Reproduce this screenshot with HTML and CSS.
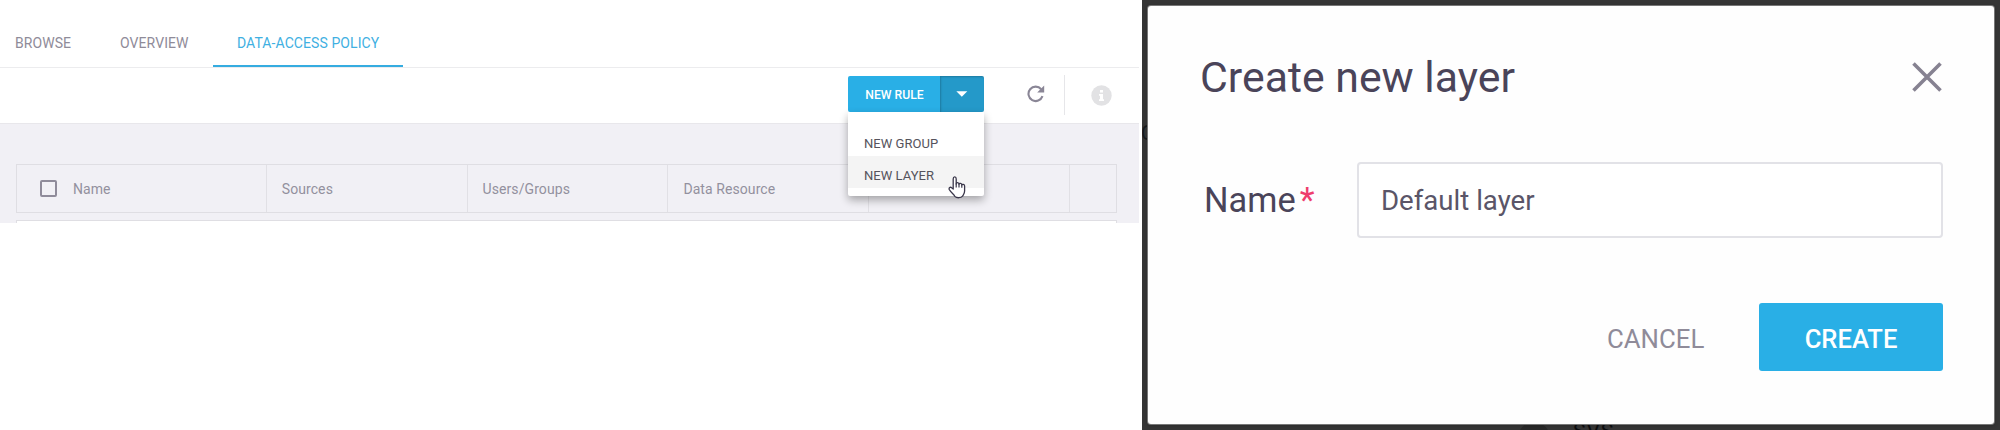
FILE: index.html
```html
<!DOCTYPE html>
<html lang="en">
<head>
<meta charset="utf-8">
<title>Data-Access Policy</title>
<link rel="stylesheet" href="styles.css">
</head>
<body>
<div class="page">
  <main class="policy">
    <nav class="tabs">
      <a class="tab tab-browse">BROWSE</a>
      <a class="tab tab-overview">OVERVIEW</a>
      <a class="tab tab-active">DATA-ACCESS POLICY</a>
    </nav>
    <div class="toolbar">
      <div class="split">
        <button class="split-main"><span>NEW RULE</span></button>
        <button class="split-toggle"><svg width="12" height="6" viewBox="0 0 12 6"><path d="M0.3 0.3H11.3L5.8 5.7Z" fill="#fff"/></svg></button>
        <div class="menu">
          <div class="menu-item">NEW GROUP</div>
          <div class="menu-item menu-hover">NEW LAYER</div>
          <svg class="cursor" width="18" height="23" viewBox="0 0 18 23"><path d="M5.2 13V2.9C5.2 .3 8.2 .3 8.2 2.9V8C8.2 6 11 6.2 11 8.2C11.3 6.8 13.8 7 13.8 9C14.2 7.8 16.6 8.2 16.6 10V15C16.6 18 15 19 14.6 20.2C13 22.2 8.6 22.2 6.8 20.4C6.2 18.6 3 16.7 1.4 13.8C.4 11.8 2.4 10.6 3.6 11.8Z" fill="#fff" stroke="#3a374a" stroke-width="1.3" stroke-linejoin="round"/><path d="M8.2 7.5V11.6M11 8V11.6M13.8 9V11.8" fill="none" stroke="#3a374a" stroke-width="1.2"/></svg>
        </div>
      </div>
      <svg class="refresh" width="18" height="18" viewBox="0 0 18 18"><path d="M14.2 4.2A7.2 7.2 0 1 0 15.5 11.2" fill="none" stroke="#8a8696" stroke-width="2.1"/><path d="M17.2 .6V7.6H10.2Z" fill="#8a8696"/></svg>
      <span class="divider"></span>
      <svg class="info" width="21" height="21" viewBox="0 0 21 21"><circle cx="10.5" cy="10.5" r="10.2" fill="#e2e2e4"/><path d="M9 5h3v2.5H9zM8 9h4v5.2h1V16H8v-1.8h1v-3.4H8z" fill="#fff"/></svg>
    </div>
    <section class="grid">
      <div class="head">
        <div class="cell cell-name"><span class="check"></span>Name</div>
        <div class="cell">Sources</div>
        <div class="cell">Users/Groups</div>
        <div class="cell">Data Resource</div>
        <div class="cell"></div>
        <div class="cell cell-last"></div>
      </div>
      <div class="row"></div>
    </section>
  </main>
  <aside class="backdrop">
    <span class="under under-left">C</span>
    <span class="under-blob"></span>
    <span class="under under-bottom">SVS</span>
    <div class="dialog">
      <header class="dialog-head">
        <h1 class="title">Create new layer</h1>
        <svg class="close" width="30" height="30" viewBox="0 0 30 30"><path d="M1.5 1.5L28.5 28.5M28.5 1.5L1.5 28.5" stroke="#868291" stroke-width="3.6" fill="none"/></svg>
      </header>
      <div class="field">
        <label class="label" for="name">Name<span class="star">*</span></label>
        <input class="input" id="name" value="Default layer">
      </div>
      <footer class="actions">
        <button class="cancel">CANCEL</button>
        <button class="create">CREATE</button>
      </footer>
    </div>
  </aside>
</div>
</body>
</html>
```
FILE: styles.css
```css
* { box-sizing: border-box; }
body { margin: 0; background: #fff; font-family: Roboto, "Liberation Sans", sans-serif; overflow: hidden; }
button { font-family: inherit; border: 0; padding: 0; }
.page { display: flex; width: 2000px; height: 430px; }

.policy { width: 1139px; height: 223px; margin-right: 3px; }
.tabs { display: flex; height: 68px; padding-left: 15px; border-bottom: 1px solid #ececee; font-size: 14px; letter-spacing: .08px; line-height: 20px; color: #8f8b99; }
.tab { display: block; height: 67px; padding-top: 33px; white-space: nowrap; }
.tab-browse { width: 105px; }
.tab-overview { width: 93px; }
.tab-active { width: 190px; padding-left: 24px; color: #3fb0e2; border-bottom: 2px solid #35ace0; }

.toolbar { display: flex; height: 55px; padding-left: 848px; }
.split { position: relative; display: flex; width: 136px; height: 36px; margin-top: 8px; z-index: 2; }
.split-main { width: 92px; background: #29afe6; color: #fff; font-size: 12.2px; font-weight: 500; border-radius: 2px 0 0 2px; padding: 1px 0 0 1px; }
.split-toggle { display: flex; width: 44px; padding: 15px 0 0 16px; background: #2499c9; border-radius: 0 2px 2px 0; box-shadow: inset 1px 1px 2px rgba(0,0,0,.2); }
.menu { position: absolute; top: 36px; left: 0; width: 136px; height: 84px; padding-top: 12px; background: #fff; border-radius: 0 0 2px 2px; box-shadow: 0 4px 8px rgba(0,0,0,.32); font-size: 13px; letter-spacing: .05px; color: #55535c; }
.menu-item { height: 32px; padding-left: 16px; line-height: 39px; }
.menu-hover { background: #f4f4f4; }
.cursor { position: absolute; left: 100px; top: 64px; }
.refresh { margin: 17px 0 0 43px; }
.divider { width: 1px; height: 40px; margin: 7px 0 0 19px; background: #e6e6e9; }
.info { margin: 17px 0 0 26px; }

.grid { height: 100px; padding: 40px 22px 0 16px; background: #f1f0f5; border-top: 1px solid #e8e7eb; overflow: hidden; }
.head { display: flex; height: 49px; border: 1px solid #dfdee3; font-size: 14px; letter-spacing: .08px; color: #93909e; }
.cell { display: flex; align-items: center; width: 201px; padding: 0 0 0 15px; border-right: 1px solid #e1e0e5; }
.cell-name { width: 250px; padding-left: 23px; }
.cell-last { width: 46px; border: 0; }
.check { width: 17px; height: 17px; margin: 0 16px 0 0; border: 2px solid #8f8b9a; border-radius: 2px; }
.row { height: 12px; margin-top: 7px; background: #fff; border: 1px solid #dfdee3; }

.backdrop { position: relative; width: 858px; height: 430px; padding: 6px 0 0 6px; background: #353535; overflow: hidden; }
.dialog { position: relative; width: 846px; height: 418px; background: #fefefe; border-radius: 3px; box-shadow: 0 0 0 1px #777, 0 1px 4px rgba(0,0,0,.3); padding: 0 51px 0 53px; }
.under { position: absolute; color: #16191d; font-size: 20px; line-height: 20px; }
.under-left { left: -1px; top: 123px; }
.under-bottom { left: 431px; top: 421px; font-size: 21px; letter-spacing: 1px; color: #0c0d0f; }
.under-blob { position: absolute; left: 376px; top: 422px; width: 32px; height: 32px; border-radius: 50%; background: #292929; }
.dialog-head { display: flex; justify-content: space-between; height: 156px; }
.title { margin: 46px 0 0 -1px; font-size: 42.8px; line-height: 50px; font-weight: 400; color: #4a4459; }
.close { margin: 56px 1px 0 0; }
.field { display: flex; height: 76px; padding-left: 3px; }
.label { width: 153px; font-size: 34.4px; line-height: 77px; color: #4a4459; white-space: nowrap; }
.star { margin-left: 4px; color: #ee3e6d; }
.input { width: 586px; height: 76px; padding: 0 0 0 22px; font: 27.6px Roboto, "Liberation Sans", sans-serif; color: #5a5568; background: #fff; border: 2px solid #e2e2e7; border-radius: 4px; outline: 0; }
.actions { display: flex; justify-content: flex-end; margin-top: 65px; height: 68px; }
.cancel { width: 97px; margin-right: 55px; background: none; color: #8f8b99; font-size: 25.8px; padding-top: 4px; }
.create { width: 184px; background: #29afe6; color: #fff; border-radius: 3px; font-size: 25.6px; font-weight: 500; padding-top: 4px; }
```
